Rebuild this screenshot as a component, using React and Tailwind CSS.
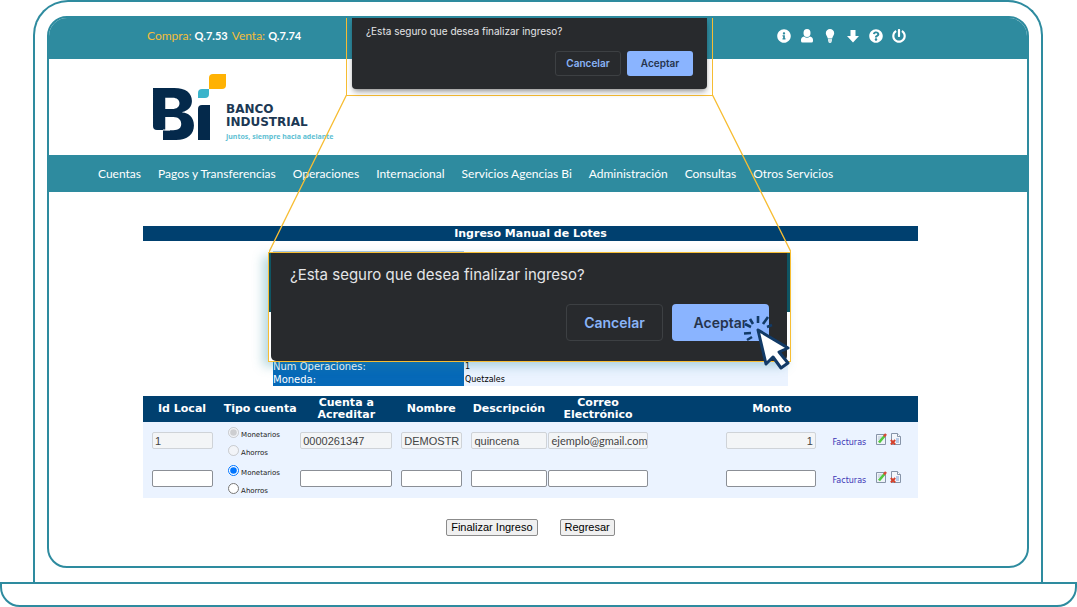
import React from "react";
import {
  FaInfoCircle,
  FaPowerOff,
  FaQuestionCircle,
} from "react-icons/fa";

const menu = [
  "Cuentas",
  "Pagos y Transferencias",
  "Operaciones",
  "Internacional",
  "Servicios Agencias Bi",
  "Administración",
  "Consultas",
  "Otros Servicios",
];

const rows = [
  {
    id: "1",
    account: "0000261347",
    name: "DEMOSTRACION",
    description: "quincena",
    email: "ejemplo@gmail.com",
    amount: "1",
    locked: true,
  },
  {
    id: "",
    account: "",
    name: "",
    description: "",
    email: "",
    amount: "",
    locked: false,
  },
];

function UserIcon() {
  return (
    <svg viewBox="0 0 14 14" className="h-3.5 w-3.5" fill="currentColor">
      <ellipse cx="7" cy="4" rx="3.500" ry="4" />
      <path d="M4 7.500Q1 8 1 11v1q0 1.500 1.500 1.500h9Q13 13.500 13 12v-1q0-3-3-3.500-3 2.500-6 0z" />
    </svg>
  );
}

function BulbIcon() {
  return (
    <svg viewBox="0 0 14 14" className="h-3.5 w-3.5" fill="currentColor">
      <path d="M7 0a4.2 4.2 0 0 0-4.2 4.2c0 2 1.6 3 2 5.3h4.4c.4-2.3 2-3.3 2-5.3A4.2 4.2 0 0 0 7 0z" />
      <path d="M5 10h4v2L8 14H6l-1-2z" opacity=".8" />
    </svg>
  );
}

function ArrowIcon() {
  return (
    <svg viewBox="0 0 14 14" className="h-3.5 w-3.5" fill="currentColor">
      <path d="M4.500 1h5v6H13l-6 6.500L1 7h3.500z" />
    </svg>
  );
}

function Logo() {
  return (
    <a href="#inicio" aria-label="Banco Industrial" className="flex items-end">
      <svg viewBox="-6 0 80 68" className="h-[68px] w-[80px] overflow-visible">
        <text
          x="-3"
          y="67"
          fill="#04294b"
          fontSize="71"
          fontWeight="800"
          fontFamily="Inter, sans-serif"
        >
          B
        </text>
        {/* notch in the lower left corner of the B */}
        <path d="M-6 53h7q0 4 4 4h6v11H-6z" fill="#fff" />
        <path d="M11 57h7" stroke="#fff" strokeWidth="1" />
        <path d="M46 36q0-4 4-4h8v35H46z" fill="#04294b" />
        <path d="M46 20q0-4 4-4h7v5q0 4-4 4h-7z" fill="#3bb4cb" />
        <path d="M57 5q0-4 4-4h13v11q0 4-4 4H57z" fill="#ffb203" />
      </svg>
      <span className="flex flex-col">
        <span className="font-['DejaVu_Sans',sans-serif] text-[12px] leading-[13px] font-semibold text-[#1c3854]">
          BANCO
          <br />
          INDUSTRIAL
        </span>
        <span className="mt-1 font-['Noto_Sans',sans-serif] text-[7px] leading-[8px] font-bold text-[#5fbfd3]">
          Juntos, siempre hacia adelante
        </span>
      </span>
    </a>
  );
}

function EditIcon() {
  return (
    <svg viewBox="0 0 11 12" className="h-3 w-[11px]">
      <path d="M.5 1.500h9v10h-9z" fill="#eef2f8" stroke="#8794a8" />
      <path d="M2 4h4M2 6h3" stroke="#b9c5d6" />
      <path d="M3 9.500 8.500 3" stroke="#52c93f" strokeWidth="2.600" />
      <path d="M8 3.500 10 1" stroke="#d84a35" strokeWidth="2.400" />
    </svg>
  );
}

function DeleteIcon() {
  return (
    <svg viewBox="0 0 11 12" className="h-3 w-[11px]">
      <path d="M1.500.5h6l3 3v8h-9z" fill="#f3f6fb" stroke="#8794a8" />
      <path d="M7.500.5v3h3" fill="#fff" stroke="#8794a8" />
      <path d="M6 5h3v5H6z" fill="#b8cbe8" />
      <path d="m.8 7 4.400 4.400M5.200 7 .8 11.400" stroke="#d6402b" strokeWidth="1.900" />
    </svg>
  );
}

function Field({ label, value, locked, className = "" }) {
  return (
    <input
      type="text"
      aria-label={label}
      defaultValue={value}
      disabled={locked}
      className={`block h-[17px] w-full rounded-xs border border-[#8b8f96] bg-white px-[2px] text-[11px] text-[#222] disabled:border-[#cfd3d8] disabled:bg-[#f3f5f7] disabled:text-[#444] ${className}`}
    />
  );
}

function AccountType({ row, index }) {
  return (
    <div className="flex flex-col gap-1 pt-1 pl-[7px]">
      {["Monetarios", "Ahorros"].map((type) => (
        <label
          key={type}
          className="flex h-[14px] items-start gap-[2px] font-['DejaVu_Sans',sans-serif] text-[7px] text-[#222]"
        >
          <input
            type="radio"
            name={`tipo-${index}`}
            defaultChecked={type === "Monetarios"}
            disabled={row.locked}
            className="m-0 h-[11px] w-[11px] shrink-0"
          />
          <span className="pt-1 leading-[9px]">{type}</span>
        </label>
      ))}
    </div>
  );
}

function BatchTable() {
  return (
    <table className="mt-[10px] w-full table-fixed border-collapse">
      <colgroup>
        <col className="w-[78px]" />
        <col className="w-[78px]" />
        <col className="w-[94px]" />
        <col className="w-[76px]" />
        <col className="w-[79px]" />
        <col className="w-[99px]" />
        <col className="w-[78px]" />
        <col className="w-[92px]" />
        <col className="w-[55px]" />
        <col className="w-[45px]" />
      </colgroup>
      <thead>
        <tr className="h-[26px] bg-[#00406f] font-['DejaVu_Sans',sans-serif] text-[11px] leading-[12px] text-white">
          <th>Id Local</th>
          <th>Tipo cuenta</th>
          <th>Cuenta a Acreditar</th>
          <th>Nombre</th>
          <th>Descripción</th>
          <th>Correo Electrónico</th>
          <th />
          <th>Monto</th>
          <th />
          <th />
        </tr>
      </thead>
      <tbody className="bg-[#ebf3ff] font-['Liberation_Sans',sans-serif]">
        {rows.map((row, i) => (
          <tr key={i} className="h-[38px]">
            <td className="pr-2 pl-[9px]">
              <Field label="Id Local" value={row.id} locked={row.locked} />
            </td>
            <td>
              <AccountType row={row} index={i} />
            </td>
            <td className="px-px">
              <Field label="Cuenta a Acreditar" value={row.account} locked={row.locked} />
            </td>
            <td className="pr-[7px] pl-2">
              <Field label="Nombre" value={row.name} locked={row.locked} />
            </td>
            <td className="pr-px pl-[2px]">
              <Field label="Descripción" value={row.description} locked={row.locked} />
            </td>
            <td>
              <Field
                label="Correo Electrónico"
                value={row.email}
                locked={row.locked}
                className="pr-0 font-['Lato',sans-serif]"
              />
            </td>
            <td />
            <td className="pr-[2px]">
              <Field
                label="Monto"
                value={row.amount}
                locked={row.locked}
                className="text-right"
              />
            </td>
            <td className="pb-[2px] pl-2 text-center">
              <a
                href="#facturas"
                className="font-['DejaVu_Sans',sans-serif] text-[8px] text-[#3b35b5]"
              >
                Facturas
              </a>
            </td>
            <td>
              <div className="flex gap-[3px] pb-1 pl-[3px]">
                <button type="button" aria-label="Editar">
                  <EditIcon />
                </button>
                <button type="button" aria-label="Eliminar">
                  <DeleteIcon />
                </button>
              </div>
            </td>
          </tr>
        ))}
      </tbody>
    </table>
  );
}

function ClickCursor() {
  return (
    <svg
      viewBox="0 0 50 56"
      className="absolute top-[297px] left-[693px] h-[56px] w-[50px]"
      fill="none"
      stroke="#123a66"
    >
      <path
        d="M5 25l5-3M2 18.500 9 18M3 9l6 3M8 4l3 5M16 1v7M26 2l-5 7M30 10l-5 2"
        strokeWidth="2.600"
      />
      <path
        d="M16 15 46 33 37 37 46 48 39 53 31 42 24 49z"
        fill="#fff"
        strokeWidth="3"
        strokeLinejoin="round"
      />
    </svg>
  );
}

export default function App() {
  return (
    <div className="flex min-h-screen flex-col bg-white">
      {/* ===== LAPTOP LID ===== */}
      <div className="mr-[34px] ml-[33px] flex flex-1 flex-col rounded-t-[35px] border-2 border-b-0 border-[#2e8b9f] px-3 py-[14px]">
        <div className="relative flex-1 overflow-hidden rounded-[20px] border-2 border-[#2e8b9f] bg-white">
          {/* ===== TOP BAR ===== */}
          <header>
            <div className="flex h-[41px] items-center justify-between bg-[#2e8b9f] pr-[121px] pb-[5px] pl-[98px] font-['Lato',sans-serif] text-[12px]">
              <p className="flex gap-1 text-[#f3bd3a]">
                <span>
                  Compra: <b className="text-[11px] text-white">Q.7.53</b>
                </span>
                <span>
                  Venta: <b className="text-[11px] text-white">Q.7.74</b>
                </span>
              </p>
              <div className="flex items-center gap-[9px] text-[14px] text-white">
                <button type="button" aria-label="Información">
                  <FaInfoCircle />
                </button>
                <button type="button" aria-label="Usuario">
                  <UserIcon />
                </button>
                <button type="button" aria-label="Consejos">
                  <BulbIcon />
                </button>
                <button type="button" aria-label="Descargar">
                  <ArrowIcon />
                </button>
                <button type="button" aria-label="Ayuda">
                  <FaQuestionCircle />
                </button>
                <button type="button" aria-label="Salir">
                  <FaPowerOff />
                </button>
              </div>
            </div>

            <div className="flex h-[96px] items-start pt-[14px] pl-[97px]">
              <Logo />
            </div>

            <nav className="flex h-[37px] items-center gap-[17px] bg-[#2e8b9f] pl-[49px] font-['Lato',sans-serif] text-[12px] whitespace-nowrap text-white">
              {menu.map((item) => (
                <a key={item} href="#menu">
                  {item}
                </a>
              ))}
            </nav>
          </header>

          {/* ===== BATCH FORM ===== */}
          <main className="pt-[34px] pr-[109px] pl-[94px]">
            <h1 className="bg-[#00406f] text-center font-['DejaVu_Sans',sans-serif] text-[11px] leading-[15px] font-bold text-white">
              Ingreso Manual de Lotes
            </h1>

            <table className="mx-auto mt-[10px] w-[515px] table-fixed border-collapse text-left font-['DejaVu_Sans',sans-serif] leading-[13px]">
              <colgroup>
                <col className="w-[191px]" />
                <col />
              </colgroup>
              <tbody>
                <tr className="h-[108px]">
                  <td className="border-t border-[#a9c8e8] bg-[#0669b8]" />
                  <td className="bg-[#ebf3ff]" />
                </tr>
                <tr>
                  <th className="bg-[#0669b8] text-[10px] font-normal text-white">
                    Num Operaciones:
                  </th>
                  <td className="bg-[#ebf3ff] pl-px text-[8px]">1</td>
                </tr>
                <tr>
                  <th className="bg-[#0669b8] text-[10px] font-normal text-white">
                    Moneda:
                  </th>
                  <td className="bg-[#ebf3ff] pl-px text-[8px]">Quetzales</td>
                </tr>
              </tbody>
            </table>

            <BatchTable />

            <div className="flex justify-center gap-[22px] pt-[21px] font-['Liberation_Sans',sans-serif] text-[11px] leading-[15px] text-black">
              <button
                type="button"
                className="rounded-xs border border-[#8b8b8b] bg-[#f0f0f0] px-1"
              >
                Finalizar Ingreso
              </button>
              <button
                type="button"
                className="rounded-xs border border-[#8b8b8b] bg-[#f0f0f0] px-1"
              >
                Regresar
              </button>
            </div>
          </main>

          {/* ===== BROWSER DIALOG ===== */}
          <div className="absolute top-0 left-[297px] w-[367px] border-x border-b border-[#f7bd33] px-[5px] pb-[6px] font-['Inter',sans-serif]">
            <div
              role="dialog"
              aria-label="Confirmación"
              className="h-[71px] rounded-b-[4px] bg-[#282a2d] pr-[14px] pl-[14px] shadow-md shadow-black/30"
            >
              <p className="pt-[5px] text-[10px] leading-4 text-[#e4e5e7]">
                ¿Esta seguro que desea finalizar ingreso?
              </p>
              <div className="mt-3 flex justify-end gap-[6px] text-[10px] font-semibold">
                <button
                  type="button"
                  className="h-[25px] w-[66px] rounded-[3px] border border-[#3d4043] text-[#8ab4f8]"
                >
                  Cancelar
                </button>
                <button
                  type="button"
                  className="h-[25px] w-[66px] rounded-[3px] bg-[#8ab4ff] text-[#26344d]"
                >
                  Aceptar
                </button>
              </div>
            </div>
          </div>

          {/* ===== ZOOMED DIALOG ===== */}
          <svg
            viewBox="0 0 522 157"
            className="absolute top-[77px] left-[220px] h-[157px] w-[522px]"
            stroke="#f7bd33"
            strokeWidth="1.300"
          >
            <path d="M77.500 0 0 157M443.500 0 522 157" />
          </svg>
          <div className="absolute top-[234px] left-[219px] w-[523px] border border-[#f7bd33] bg-linear-to-b from-[#0f5563] from-55% to-white to-55% pr-[3px] pl-[2px] font-['Inter',sans-serif] shadow-[-5px_4px_10px_rgba(46,139,159,0.35)]">
            <div
              role="dialog"
              aria-label="Confirmación ampliada"
              className="h-[108px] rounded-b-[5px] bg-[#282a2d] pr-[18px] pl-[19px]"
            >
              <p className="pt-3 text-[15px] leading-5 text-[#e4e5e7]">
                ¿Esta seguro que desea finalizar ingreso?
              </p>
              <div className="mt-[19px] flex justify-end gap-[9px] text-[14px] font-semibold">
                <button
                  type="button"
                  className="h-[37px] w-[97px] rounded-[4px] border border-[#3d4043] text-[#8ab4f8]"
                >
                  Cancelar
                </button>
                <button
                  type="button"
                  className="h-[37px] w-[97px] rounded-[4px] bg-[#8ab4ff] text-[#26344d]"
                >
                  Aceptar
                </button>
              </div>
            </div>
          </div>
          <ClickCursor />
        </div>
      </div>

      {/* ===== LAPTOP BASE ===== */}
      <div className="h-[25px] rounded-b-[20px] border-2 border-[#2e8b9f]" />
    </div>
  );
}
